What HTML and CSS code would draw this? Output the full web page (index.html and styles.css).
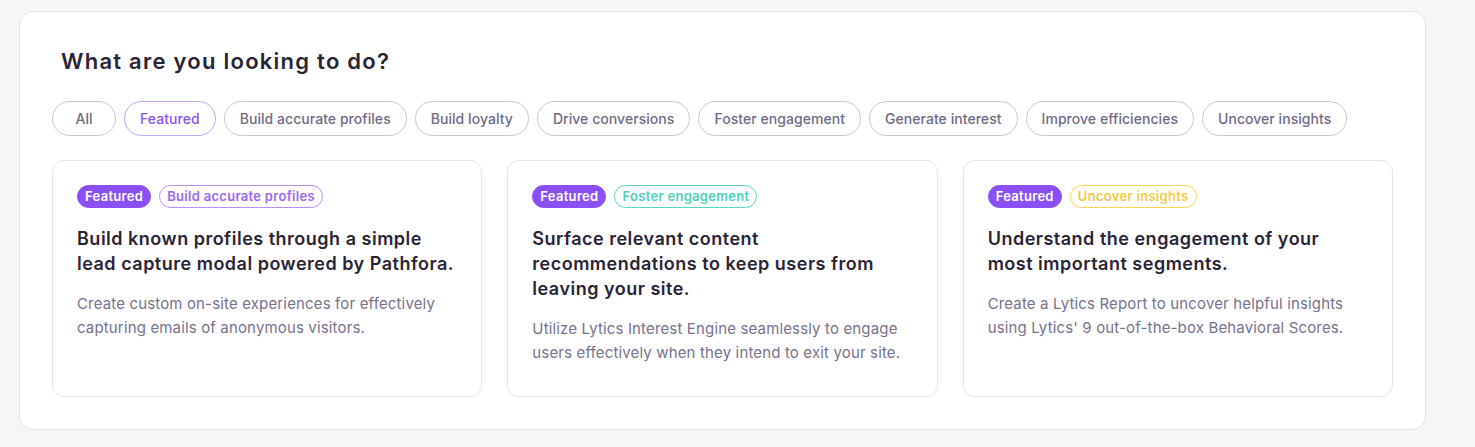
FILE: index.html
```html
<!doctype html>
<html lang="en">
  <head>
    <meta charset="UTF-8" />
    <meta name="viewport" content="width=device-width, initial-scale=1.0" />
    <title>Recipes</title>
    <link rel="stylesheet" href="styles.css">
  </head>
  <body>
    <div class="panel">
      <h1 class="panel-title">What are you looking to do?</h1>

      <div class="filters">
        <button class="chip">All</button>
        <button class="chip chip-active">Featured</button>
        <button class="chip">Build accurate profiles</button>
        <button class="chip">Build loyalty</button>
        <button class="chip">Drive conversions</button>
        <button class="chip">Foster engagement</button>
        <button class="chip">Generate interest</button>
        <button class="chip">Improve efficiencies</button>
        <button class="chip">Uncover insights</button>
      </div>

      <div class="cards">
        <div class="card">
          <div class="tags">
            <span class="tag tag-featured">Featured</span>
            <span class="tag tag-purple">Build accurate profiles</span>
          </div>
          <h2 class="card-title">Build known profiles through a simple lead capture modal powered by Pathfora.</h2>
          <p class="card-text">Create custom on-site experiences for effectively capturing emails of anonymous visitors.</p>
        </div>

        <div class="card">
          <div class="tags">
            <span class="tag tag-featured">Featured</span>
            <span class="tag tag-teal">Foster engagement</span>
          </div>
          <h2 class="card-title">Surface relevant content recommendations to keep users from leaving your site.</h2>
          <p class="card-text">Utilize Lytics Interest Engine seamlessly to engage users effectively when they intend to exit your site.</p>
        </div>

        <div class="card">
          <div class="tags">
            <span class="tag tag-featured">Featured</span>
            <span class="tag tag-yellow">Uncover insights</span>
          </div>
          <h2 class="card-title">Understand the engagement of your most important segments.</h2>
          <p class="card-text">Create a Lytics Report to uncover helpful insights using Lytics' 9 out-of-the-box Behavioral Scores.</p>
        </div>
      </div>
    </div>
  </body>
</html>
```

FILE: styles.css
```css
body {
  margin: 0;
  padding: 11px 49px 18px 19px;
  background: #f6f6f6;
  font-family: Inter, "Noto Sans", sans-serif;
  color: #2a2536;
}
.panel {
  background: #fff;
  border: 1px solid #e3e3e8;
  border-radius: 14px;
  padding: 34px 32px 32px;
}
.panel-title {
  margin: 0 0 25px 9px;
  font-size: 22px;
  line-height: 30px;
  font-weight: 600;
  letter-spacing: 1.25px;
  color: #2a2536;
}
.filters {
  display: flex;
  flex-wrap: wrap;
  gap: 8px;
}
.chip {
  height: 35px;
  min-width: 64px;
  padding: 0 15px;
  border: 1px solid #c8c6d3;
  border-radius: 18px;
  background: #fff;
  font-family: inherit;
  font-size: 14px;
  font-weight: 500;
  letter-spacing: 0.05px;
  color: #6f6b86;
  cursor: pointer;
}
.chip-active {
  border-color: #c4a6fa;
  color: #8b55f3;
}
.cards {
  display: grid;
  grid-template-columns: repeat(3, 1fr);
  gap: 25px;
  margin-top: 24px;
}
.card {
  border: 1px solid #e4e4ea;
  border-radius: 12px;
  padding: 24px 25px 24px 24px;
  min-height: 187px;
}
.tags {
  display: flex;
  gap: 8px;
}
.tag {
  height: 23px;
  line-height: 21px;
  padding: 0 7px;
  border: 1px solid transparent;
  border-radius: 12px;
  font-size: 13px;
  font-weight: 600;
  letter-spacing: 0.3px;
  box-sizing: border-box;
}
.tag-featured {
  background: #8b50f5;
  border-color: #8b50f5;
  color: #fff;
}
.tag-purple {
  border-color: #b88ff8;
  color: #9a68f5;
}
.tag-teal {
  border-color: #5ad6c3;
  color: #4fd1bd;
}
.tag-yellow {
  border-color: #fcd652;
  color: #f7cb3b;
}
.card-title {
  margin: 18px 0 0;
  font-size: 18px;
  line-height: 25px;
  font-weight: 600;
  letter-spacing: 0.5px;
  color: #2a2536;
}
.card-text {
  margin: 16px 0 0;
  font-size: 15px;
  line-height: 24px;
  letter-spacing: 0.15px;
  color: #77738c;
}
```
